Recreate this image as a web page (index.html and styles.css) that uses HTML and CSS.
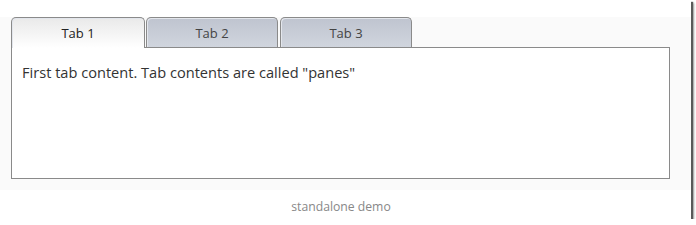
FILE: index.html
```html
<!DOCTYPE html>
<html>
<head>
<meta charset="utf-8">
<link rel="stylesheet" href="styles.css">
</head>
<body>
<div class="window">
  <div class="top"></div>
  <div class="stage">
    <ul class="tabs">
      <li class="tab current">Tab 1</li>
      <li class="tab">Tab 2</li>
      <li class="tab">Tab 3</li>
    </ul>
    <div class="pane">First tab content. Tab contents are called "panes"</div>
  </div>
  <div class="footer">standalone demo</div>
</div>
</body>
</html>
```

FILE: styles.css
```css
html, body {
  margin: 0;
  padding: 0;
  background: #ffffff;
}
.window {
  width: 691px;
  height: 219px;
  background: #ffffff;
  box-shadow: 2px 2px 1px #5a5a5a, 3px 3px 2px rgba(0,0,0,0.35);
  display: flex;
  flex-direction: column;
  font-family: "Open Sans", "DejaVu Sans", sans-serif;
}
.top {
  height: 17px;
}
.stage {
  background: #fafafa;
  height: 173px;
  padding: 0 21px 0 11px;
  box-sizing: border-box;
}
.tabs {
  list-style: none;
  margin: 0;
  padding: 0;
  display: flex;
  gap: 2px;
  height: 30px;
}
.tab {
  width: 132px;
  height: 30px;
  box-sizing: border-box;
  border: 1px solid #8a8a8a;
  border-bottom: none;
  border-radius: 5px 5px 0 0;
  background: linear-gradient(#bfc4cf, #d0d5de);
  box-shadow: inset 1px 1px 0 #e3e6ec;
  text-align: center;
  font-size: 13px;
  line-height: 30px;
  color: #444;
}
.tab.current {
  width: 134px;
  margin-right: -1px;
  background: linear-gradient(#e9e9e9, #ffffff);
  color: #222;
  height: 31px;
  position: relative;
  z-index: 1;
}
.pane {
  background: #ffffff;
  border: 1px solid #8a8a8a;
  height: 132px;
  box-sizing: border-box;
  padding: 14px 10px;
  font-size: 14.6px;
  color: #333;
}
.footer {
  flex: 1;
  text-align: center;
  font-size: 12.2px;
  color: #888;
  padding: 8px 9px 0 0;
}
```
